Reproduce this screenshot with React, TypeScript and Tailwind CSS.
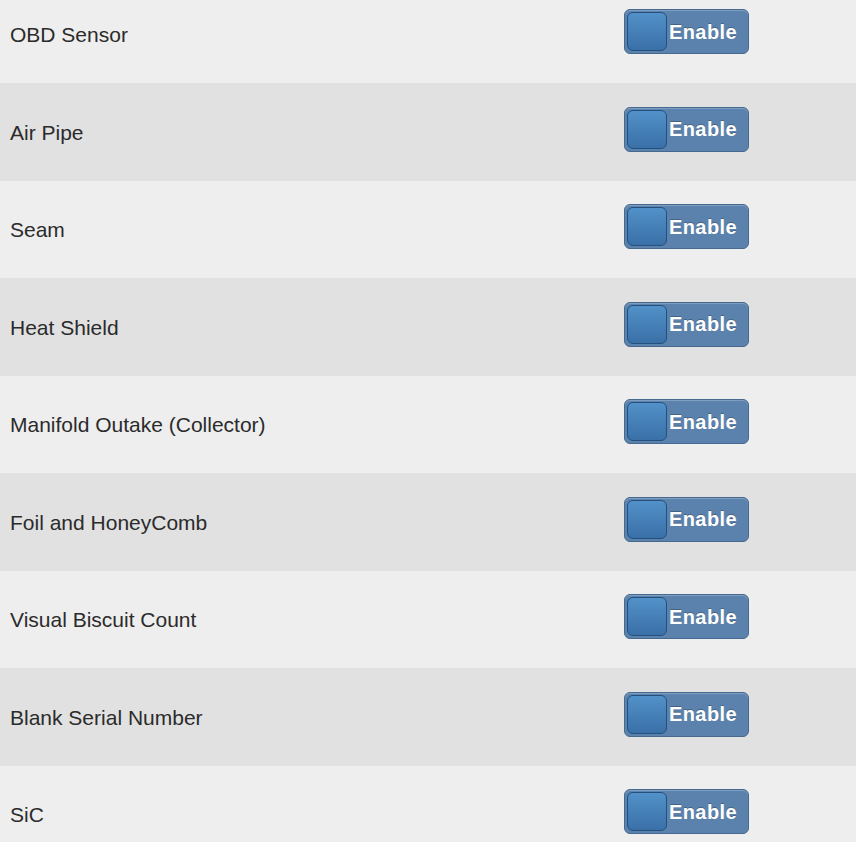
const items = [
  "OBD Sensor",
  "Air Pipe",
  "Seam",
  "Heat Shield",
  "Manifold Outake (Collector)",
  "Foil and HoneyComb",
  "Visual Biscuit Count",
  "Blank Serial Number",
  "SiC",
];

const Toggle = () => (
  <button className="flex items-center w-[125px] h-[45px] rounded-[6px] border border-[#46698f] bg-[#5a82ad] p-[2px] shadow-[inset_0_1px_1px_rgba(255,255,255,0.25)]">
    <span className="block w-[40px] h-[39px] rounded-[6px] border border-[#23507d] bg-gradient-to-b from-[#5291c9] to-[#3a70a8]" />
    <span className="ml-[2px] text-[20px] tracking-[0.4px] font-bold text-white [text-shadow:0_-1px_0_rgba(0,0,0,0.25)]">
      Enable
    </span>
  </button>
);

export default function App() {
  return (
    <div className="w-[856px] h-[842px] overflow-hidden bg-[#eeeeee] font-['Liberation_Sans',Arial,sans-serif]">
      <div className="-mt-[14.5px]">
        {items.map((label, i) => (
          <div
            key={label}
            className={`flex items-center justify-between h-[97.5px] pl-[10px] pr-[107px] ${
              i % 2 === 1 ? "bg-[#e1e1e1]" : "bg-[#eeeeee]"
            }`}
          >
            <span className="mt-[1px] text-[21px] text-[#2b2b2b]">{label}</span>
            <div className="-mt-[5px]">
              <Toggle />
            </div>
          </div>
        ))}
      </div>
    </div>
  );
}
